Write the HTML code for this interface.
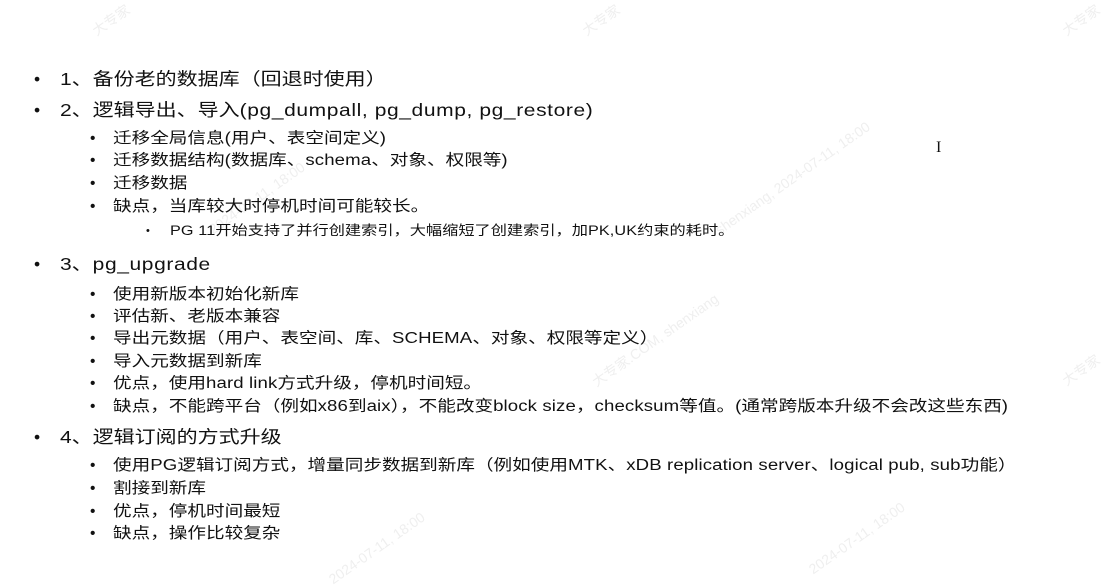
<!DOCTYPE html>
<html><head><meta charset="utf-8"><style>
body{margin:0;width:1111px;height:577px;background:#fff;position:relative;overflow:hidden;font-family:"Liberation Sans","Noto Sans CJK SC",sans-serif;color:#111}
.l{position:absolute;white-space:nowrap;line-height:1;transform:scaleX(1.2);transform-origin:0 0}
.b{position:absolute;white-space:nowrap;line-height:1}
.a{font-size:17.5px}.c{font-size:15.5px}.d{font-size:11px}
.e{letter-spacing:0.1px}
.a .e{letter-spacing:0.5px}
.w{position:absolute;color:#efefef;font-size:14px;transform:rotate(-35deg);white-space:nowrap}
</style></head><body>
<div class="w" style="left:90px;top:10px">大专家</div>
<div class="w" style="left:580px;top:10px">大专家</div>
<div class="w" style="left:1060px;top:10px">大专家</div>
<div class="w" style="left:200px;top:190px">2024-07-11, 18:00</div>
<div class="w" style="left:700px;top:170px">shenxiang, 2024-07-11, 18:00</div>
<div class="w" style="left:580px;top:330px">大专家.COM, shenxiang</div>
<div class="w" style="left:1060px;top:360px">大专家</div>
<div class="w" style="left:320px;top:540px">2024-07-11, 18:00</div>
<div class="w" style="left:800px;top:530px">2024-07-11, 18:00</div>

<div class="b a" style="left:34px;top:71px">•</div><div class="l a" style="left:60px;top:71px">1、备份老的数据库（回退时使用）</div>
<div class="b a" style="left:34px;top:102px">•</div><div class="l a" style="left:60px;top:102px">2、逻辑导出、导入<span class="e">(pg_dumpall, pg_dump, pg_restore)</span></div>
<div class="b c" style="left:90px;top:131px">•</div><div class="l c" style="left:113px;top:131px">迁移全局信息<span class="e">(</span>用户、表空间定义<span class="e">)</span></div>
<div class="b c" style="left:90px;top:153px">•</div><div class="l c" style="left:113px;top:153px">迁移数据结构<span class="e">(</span>数据库、<span class="e">schema</span>、对象、权限等<span class="e">)</span></div>
<div class="b c" style="left:90px;top:176px">•</div><div class="l c" style="left:113px;top:176px">迁移数据</div>
<div class="b c" style="left:90px;top:199px">•</div><div class="l c" style="left:113px;top:199px">缺点，当库较大时停机时间可能较长。</div>
<div class="b d" style="left:146px;top:226px">•</div><div class="l d" style="left:170px;top:224px;font-size:13.5px"><span class="e">PG 11</span>开始支持了并行创建索引，大幅缩短了创建索引，加<span class="e">PK,UK</span>约束的耗时。</div>
<div class="b a" style="left:34px;top:256px">•</div><div class="l a" style="left:60px;top:256px">3、<span class="e">pg_upgrade</span></div>
<div class="b c" style="left:90px;top:287px">•</div><div class="l c" style="left:113px;top:287px">使用新版本初始化新库</div>
<div class="b c" style="left:90px;top:309px">•</div><div class="l c" style="left:113px;top:309px">评估新、老版本兼容</div>
<div class="b c" style="left:90px;top:331px">•</div><div class="l c" style="left:113px;top:331px">导出元数据（用户、表空间、库、<span class="e">SCHEMA</span>、对象、权限等定义）</div>
<div class="b c" style="left:90px;top:354px">•</div><div class="l c" style="left:113px;top:354px">导入元数据到新库</div>
<div class="b c" style="left:90px;top:376px">•</div><div class="l c" style="left:113px;top:376px">优点，使用<span class="e">hard link</span>方式升级，停机时间短。</div>
<div class="b c" style="left:90px;top:399px">•</div><div class="l c" style="left:113px;top:399px">缺点，不能跨平台（例如<span class="e">x86</span>到<span class="e">aix</span>），不能改变<span class="e">block size</span>，<span class="e">checksum</span>等值。<span class="e">(</span>通常跨版本升级不会改这些东西<span class="e">)</span></div>
<div class="b a" style="left:34px;top:429px">•</div><div class="l a" style="left:60px;top:429px">4、逻辑订阅的方式升级</div>
<div class="b c" style="left:90px;top:458px">•</div><div class="l c" style="left:113px;top:458px">使用<span class="e">PG</span>逻辑订阅方式，增量同步数据到新库（例如使用<span class="e">MTK</span>、<span class="e">xDB replication server</span>、<span class="e">logical pub, sub</span>功能）</div>
<div class="b c" style="left:90px;top:481px">•</div><div class="l c" style="left:113px;top:481px">割接到新库</div>
<div class="b c" style="left:90px;top:504px">•</div><div class="l c" style="left:113px;top:504px">优点，停机时间最短</div>
<div class="b c" style="left:90px;top:526px">•</div><div class="l c" style="left:113px;top:526px">缺点，操作比较复杂</div>
<div class="b" style="left:936px;top:140px;font-size:16px;font-family:'Liberation Serif',serif">I</div>
</body></html>
